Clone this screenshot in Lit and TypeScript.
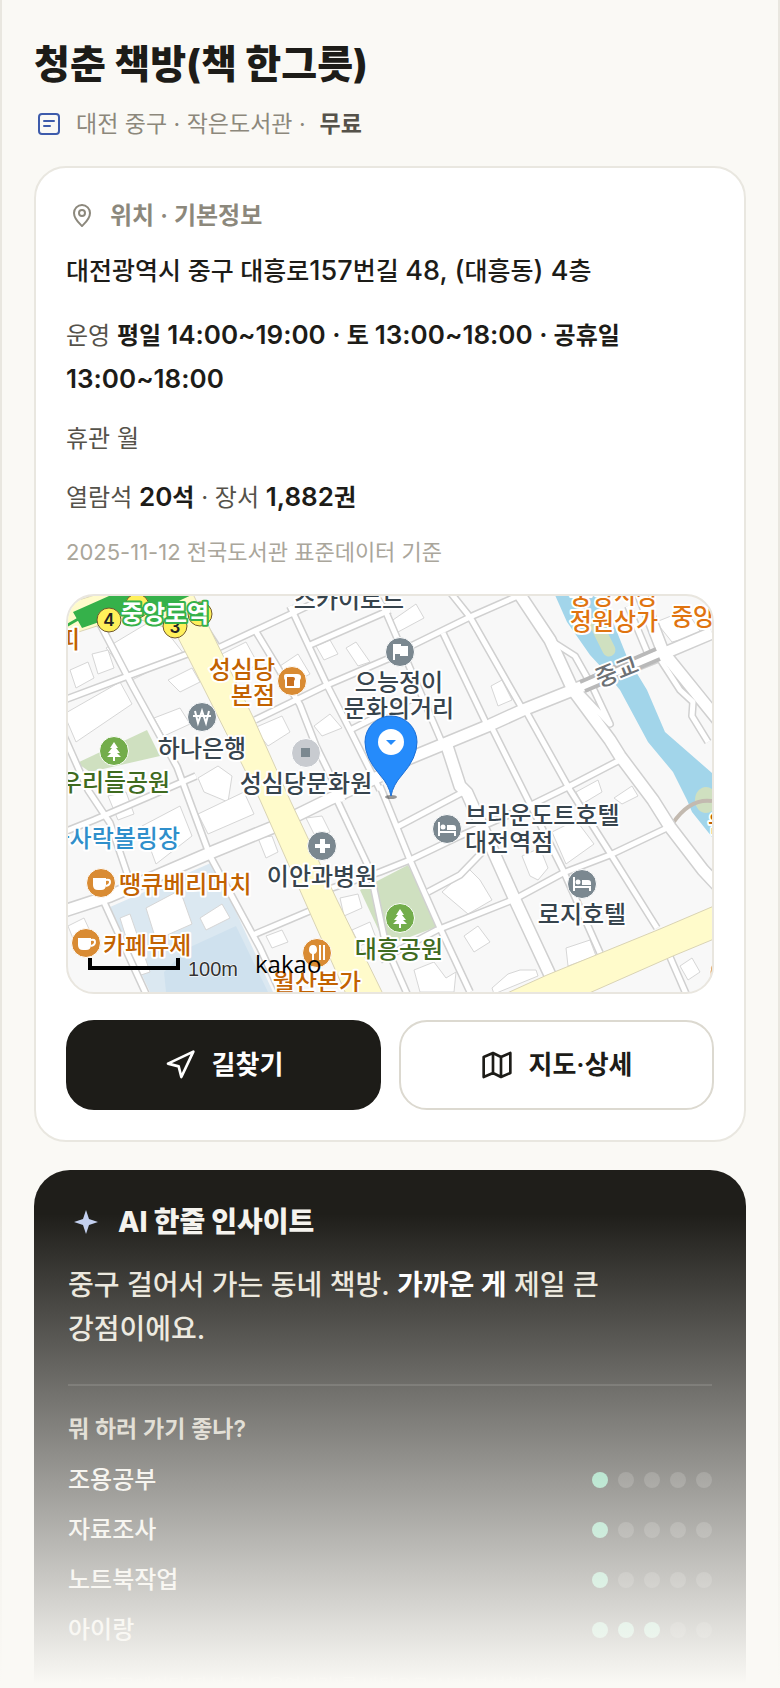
import { LitElement, html, css, svg } from 'lit';
import { customElement, property } from 'lit/decorators.js';
import { classMap } from 'lit/directives/class-map.js';

type Poi = {
  x: number;
  y: number;
  kind: string;
  icon: string;
  anchor: string;
  // [x, y, text] for each label line
  lines: [number, number, string][];
};

const MAJOR_ROADS = [
  '312,176 342,162 422,129 455,114 505,94 592,59 644,37',
  '450,-4 482,44 505,94 542,144 552,160 585,204 602,231 635,274 650,290',
  '-4,315 42,300 142,257 208,230',
  '379,150 392,190 399,197 447,304 482,379',
  '572,-4 595,56 650,124',
  '205,231 260,204 312,180',
];

const MINOR_ROADS = [
  '375,37 419,129',
  '382,-4 402,21 455,114',
  '187,124 259,89 322,62 345,49 402,21 452,-1',
  '305,-4 317,14 375,149',
  '424,132 460,204 495,274 532,357',
  '459,117 502,194 542,257 589,332',
  '459,211 502,190 552,164',
  '258,294 312,276 342,264 392,240 459,211',
  '329,231 399,194',
  '312,190 342,264 372,332 402,396',
  '312,364 369,334 447,303 495,277 542,259 599,232',
  '360,296 392,279 422,248',
  '602,361 619,400',
  '482,44 507,60 525,92 542,128 510,94',
  '560,10 580,58',
  '590,60 612,94 625,106 624,120 640,146',
  '10,-10 30,24 65,91 109,171 142,260 192,352 214,400',
  '-4,104 60,80 125,56',
  '150,52 225,17 269,-4',
  '187,34 210,72 232,109 248,150 275,205',
  '222,10 259,89 282,134 312,194',
  '242,49 322,14',
  '282,134 342,104',
  '-4,140 20,194 42,227 60,280 68,296',
  '-4,236 26,224 82,200 128,180',
  '35,304 79,400',
  '185,339 244,314',
  '269,204 302,274 318,350 340,400',
  '120,6 150,52',
];

const BUILDINGS = [
  '38,52 88,22 116,58 64,84',
  '2,74 20,66 26,82 8,92',
  '24,58 40,54 46,72 30,78',
  '-4,118 52,86 64,108 8,146',
  '100,84 124,72 132,86 112,96',
  '86,122 112,112 122,128 96,140',
  '150,60 178,46 190,68 166,82',
  '212,70 230,58 242,78 224,88',
  '186,132 214,120 222,136 200,150',
  '246,130 262,118 274,132 254,140',
  '248,50 262,44 270,58 256,64',
  '278,52 288,46 302,66 290,70',
  '130,182 150,170 164,180 160,206 136,196',
  '130,218 176,196 186,218 140,238',
  '74,230 112,210 124,240 88,268',
  '40,200 58,196 66,218 50,224',
  '190,242 204,240 210,256 198,262',
  '238,222 254,220 262,236 248,242',
  '322,26 348,8 356,22 330,36',
  '423,90 434,84 444,104 430,110',
  '508,196 530,184 534,196 514,208',
  '546,202 564,190 570,200 554,208',
  '484,236 508,224 526,248 498,268',
  '454,260 472,252 480,272 470,284 462,280',
  '374,296 400,272 412,284 424,304 400,318',
  '396,340 410,330 422,346 406,356',
  '346,374 366,366 378,382 388,376 386,396 352,396',
  '424,392 440,378 452,374 468,374 470,380 426,398',
  '498,352 522,344 528,360 500,370',
  '588,26 618,14 634,38 604,46',
  '612,370 624,362 632,376 620,384',
  '272,302 290,298 294,312 276,320',
  '284,334 302,326 308,342 292,350',
  '198,340 214,334 220,346 204,352',
  '0,330 16,322 26,344 8,350',
];

const CAMPUS = [
  '78,312 112,294 124,328 88,344',
  '132,322 154,308 162,322 138,334',
  '52,322 62,318 82,376 70,380',
];

const POIS: Poi[] = [
  { x: 224, y: 85, kind: 'food', icon: 'bread', anchor: 'end', lines: [[207, 82, '성심당'], [207, 108, '본점']] },
  { x: 134, y: 121, kind: 'place', icon: 'won', anchor: 'middle', lines: [[134, 161, '하나은행']] },
  { x: 46, y: 155, kind: 'park', icon: 'tree', anchor: 'middle', lines: [[47, 195, '우리들공원']] },
  { x: 238, y: 157, kind: 'muted', icon: 'square', anchor: 'middle', lines: [[238, 196, '성심당문화원']] },
  { x: 332, y: 56, kind: 'place', icon: 'flag', anchor: 'middle', lines: [[331, 95, '으능정이'], [331, 121, '문화의거리']] },
  { x: 379, y: 233, kind: 'place', icon: 'bed', anchor: 'start', lines: [[397, 228, '브라운도트호텔'], [397, 255, '대전역점']] },
  { x: 514, y: 288, kind: 'place', icon: 'bed', anchor: 'middle', lines: [[514, 327, '로지호텔']] },
  { x: 332, y: 322, kind: 'park', icon: 'tree', anchor: 'middle', lines: [[331, 362, '대흥공원']] },
  { x: 254, y: 250, kind: 'place', icon: 'cross', anchor: 'middle', lines: [[254, 289, '이안과병원']] },
  { x: 33, y: 287, kind: 'food', icon: 'cup', anchor: 'start', lines: [[51, 297, '땡큐베리머치']] },
  { x: 18, y: 347, kind: 'food', icon: 'cup', anchor: 'start', lines: [[35, 358, '카페뮤제']] },
  { x: 249, y: 357, kind: 'food', icon: 'fork', anchor: 'middle', lines: [[249, 395, '월산본가']] },
];

const GLYPHS: Record<string, unknown> = {
  bread: svg`<path fill="#fff" d="M-8-5q0-2 2-2H5q4 0 4 3 0 2-1 3v7q0 1-1 1H-6q-1 0-1-1v-7q-1-1-1-4z"/><path fill="#c9701f" d="M-5-4H1q2 0 2 2L2 0v5h-7v-6z"/>`,
  won: svg`<path fill="none" stroke="#fff" stroke-width="2" d="M-7-6-4 6 0-6 4 6 7-6M-9-1H9"/>`,
  tree: svg`<path fill="#fff" d="M0-9 4-3H2l4 5H3l4 4H1v4h-2V6h-6l4-4h-3l4-5h-2z"/>`,
  square: svg`<rect fill="#7b8890" x="-5" y="-5" width="9" height="9"/>`,
  flag: svg`<path fill="#fff" d="M-7-8H1v2h7V4H0V2h-5v6h-2z"/>`,
  bed: svg`<path fill="#fff" d="M-9-7h2V2H9v5H7V4H-7v3h-2zM0-4h6q3 0 3 3v2H0z"/><circle fill="#fff" cx="-4" cy="-2" r="2.5"/>`,
  cross: svg`<path fill="#fff" d="M-2-7h5v5h5v4H3v5h-5V2h-5v-4h5z"/>`,
  cup: svg`<path fill="#fff" d="M-8-5H5v7q0 5-5 5h-3q-5 0-5-5z"/><path fill="none" stroke="#fff" stroke-width="2" d="M5-3q4-1 4 2T5 3"/>`,
  fork: svg`<path fill="#fff" d="M-4-8q4 0 4 5Q0 0-3 1v8h-2V1q-3-1-3-4 0-5 4-5zM2-8h2V7H2zM6-8h2V7H6z"/>`,
};

@customElement('mini-map')
export class MiniMap extends LitElement {
  static styles = css`
    :host {
      display: block;
      height: 400px;
      overflow: hidden;
      border: 2px solid #e9e6df;
      border-radius: 28px;
      background: #f8f8f8;
    }

    svg {
      display: block;
      width: 100%;
      height: 100%;
    }

    text {
      font-family: 'Noto Sans CJK KR', sans-serif;
      font-size: 24px;
      font-weight: 500;
      fill: #37444d;
      stroke: #fff;
      stroke-width: 4px;
      stroke-linejoin: round;
      paint-order: stroke;
    }

    .casing,
    .surface {
      fill: none;
      stroke-linejoin: round;
    }

    .casing {
      stroke: #d0d0d0;
      stroke-width: 8px;
    }

    .surface {
      stroke: #fff;
      stroke-width: 5px;
    }

    .casing.major {
      stroke-width: 14px;
    }

    .surface.major {
      stroke-width: 11px;
    }

    .avenue {
      fill: #fffbcb;
      stroke: #d9d3b4;
      stroke-width: 1px;
    }

    .river {
      fill: #a2d5ea;
    }

    .green {
      fill: #cfe0c0;
    }

    .campus {
      fill: #dbe8f1;
    }

    .campus-inner {
      fill: #cfe1ee;
    }

    .building {
      fill: #fff;
      stroke: #d6d6d6;
      stroke-width: 1px;
    }

    .bridge {
      fill: none;
      stroke: #b9b9b9;
      stroke-width: 4px;
    }

    .dot {
      stroke: #fff;
      stroke-width: 1px;
      fill: #7b8890;
    }

    .dot.food {
      fill: #d98b33;
    }

    .dot.park {
      fill: #73ad4b;
    }

    .dot.muted {
      fill: #c8cbd0;
    }

    text.food {
      fill: #c26200;
    }

    text.park {
      fill: #3f6b1f;
    }

    text.market {
      fill: #e07410;
    }

    text.leisure {
      fill: #2f8fcb;
    }

    text.road {
      fill: #6d7175;
    }

    text.station {
      fill: #fff;
      stroke: #35b14a;
      font-weight: 700;
    }

    .exit {
      fill: #fff05a;
      stroke: #6f5730;
      stroke-width: 1px;
    }

    text.exit-no {
      font-family: Inter, sans-serif;
      font-size: 17px;
      font-weight: 600;
      fill: #222;
      stroke: none;
    }

    .scale-bar {
      fill: none;
      stroke: #000;
      stroke-width: 4px;
    }

    text.scale {
      font-family: 'Liberation Sans', sans-serif;
      font-size: 20px;
      font-weight: 400;
      fill: #333;
      stroke-width: 1px;
    }

    text.brand {
      font-family: 'Open Sans', sans-serif;
      font-size: 24px;
      fill: #000;
      stroke: none;
    }
  `;

  renderPoi(poi: Poi) {
    return svg`
      <circle class="dot ${poi.kind}" cx=${poi.x} cy=${poi.y} r="14.5" />
      <g transform="translate(${poi.x} ${poi.y})">${GLYPHS[poi.icon]}</g>
      ${poi.lines.map(
        ([x, y, label]) =>
          svg`<text class=${poi.kind} x=${x} y=${y} text-anchor=${poi.anchor}>${label}</text>`
      )}
    `;
  }

  render() {
    return html`
      <svg viewBox="0 0 644 396" preserveAspectRatio="xMidYMid slice" role="img" aria-label="청춘 책방 주변 지도">
        <!-- ground -->
        <polygon class="campus" points="42,311 145,266 205,396 82,396" />
        <path class="campus-inner" d="M96 376 120 352 168 330 200 396H98z" />
        <polygon class="green" points="9,167 79,134 92,160 22,176" />
        <polygon class="green" points="292,294 340,269 371,330 318,350" />
        ${BUILDINGS.map((p) => svg`<polygon class="building" points=${p} />`)}
        ${CAMPUS.map((p) => svg`<polygon class="building" points=${p} />`)}

        <polygon
          class="river"
          points="487,-1 499,26 522,59 534,72 552,94 580,146 605,176 619,204 624,216 644,241 644,177 597,136 579,94 559,61 545,26 532,-1"
        />
        <path fill="none" stroke="#cfe0c0" stroke-width="13" stroke-linecap="round" d="M528 28 541 54" />
        <ellipse class="green" cx="638" cy="204" rx="11" ry="13" />
        <path fill="none" stroke="#c3bab0" stroke-width="4" d="M605 227Q622 202 644 205" />

        <!-- streets: every casing goes under every surface -->
        ${MINOR_ROADS.map((p) => svg`<polyline class="casing" points=${p} />`)}
        ${MAJOR_ROADS.map((p) => svg`<polyline class="casing major" points=${p} />`)}
        ${MINOR_ROADS.map((p) => svg`<polyline class="surface" points=${p} />`)}
        ${MAJOR_ROADS.map((p) => svg`<polyline class="surface major" points=${p} />`)}
        <polygon
          class="avenue"
          points="-2,40 -2,8 30,-2 125,-2 144,37 185,121 222,204 269,304 315,398 278,398 242,317 192,204 120,61 106,34 60,20"
        />
        <polygon class="avenue" points="437,398 479,379 592,333 646,310 646,343 605,360 519,398" />
        <path class="bridge" d="M512 86 588 53M517 95 592 63" />

        <!-- subway station -->
        <path fill="#35b14a" d="M5 16 50-4H130l-30 14-40 6-46 16z" />
        <path fill="none" stroke="#35b14a" stroke-width="3" d="M-2 30 12 22" />
        <circle class="exit" cx="69" cy="10" r="12" />
        <circle class="exit" cx="132" cy="18" r="12" />
        <circle class="exit" cx="107" cy="30" r="12" />
        <circle class="exit" cx="41" cy="24" r="12" />
        <text class="exit-no" x="107" y="37" text-anchor="middle">3</text>
        <text class="exit-no" x="41" y="30" text-anchor="middle">4</text>
        <text class="station" x="97" y="26" text-anchor="middle">중앙로역</text>

        <text x="281" y="12" text-anchor="middle">스카이로드</text>
        <text class="market" x="546" y="8" text-anchor="middle">중앙시장</text>
        <text class="market" x="546" y="34" text-anchor="middle">정원상가</text>
        <text class="market" x="603" y="29">중앙</text>
        <text class="food" x="12" y="52" text-anchor="end">피</text>
        <text class="food" x="640" y="236">원</text>
        <circle class="dot food" cx="656" cy="376" r="14" />
        <text class="leisure" x="112" y="251" text-anchor="end">가사락볼링장</text>
        <text class="road" x="549" y="84" text-anchor="middle" transform="rotate(-22 549 76)">중교</text>
        ${POIS.map((poi) => this.renderPoi(poi))}

        <!-- marker -->
        <ellipse cx="323" cy="201" rx="6" ry="2" fill="#0006" />
        <path
          fill="#258bfb"
          stroke="#1b6fd6"
          d="M323 200Q321 189 312 179 297 162 297 146A26 26 0 0 1 349 146Q349 162 334 179 325 189 323 200z"
        />
        <circle cx="323" cy="146" r="13" fill="#fff" />
        <path fill="#258bfb" d="M318 144H328L323 149z" />

        <path class="scale-bar" d="M22 362V372H110V362" />
        <text class="scale" x="120" y="380">100m</text>
        <text class="brand" x="187" y="377">kakao</text>
      </svg>
    `;
  }
}

@customElement('score-row')
export class ScoreRow extends LitElement {
  @property() label = '';
  @property({ type: Number }) score = 0;

  static styles = css`
    :host {
      display: flex;
      align-items: center;
      justify-content: space-between;
      font-size: 24px;
      font-weight: 500;
      line-height: 50px;
      color: #f2efe8;
    }

    .dots {
      display: flex;
      gap: 10px;
    }

    .dot {
      width: 16px;
      height: 16px;
      border-radius: 50%;
      background: rgba(255, 255, 255, 0.16);
    }

    .dot.on {
      background: #6fcfa6;
    }
  `;

  render() {
    return html`
      <span>${this.label}</span>
      <span class="dots" role="img" aria-label="5점 중 ${this.score}점">
        ${[1, 2, 3, 4, 5].map((n) => html`<i class=${classMap({ dot: true, on: n <= this.score })}></i>`)}
      </span>
    `;
  }
}

@customElement('app-root')
export class AppRoot extends LitElement {
  @property({ attribute: false }) scores = [
    { label: '조용공부', score: 1 },
    { label: '자료조사', score: 1 },
    { label: '노트북작업', score: 1 },
    { label: '아이랑', score: 3 },
  ];

  static styles = css`
    :host {
      display: block;
      min-height: 100vh;
      background: #faf9f5;
      color: #1d1c18;
      font-family: Inter, 'Noto Sans CJK KR', sans-serif;
      font-size: 24px;
      word-break: keep-all;
    }

    * {
      box-sizing: border-box;
    }

    h1,
    h2,
    h3,
    p {
      margin: 0;
    }

    main {
      border: solid #e9e7e0;
      border-width: 0 2px;
      padding: 38px 32px 0;
    }

    h1 {
      font-size: 39px;
      font-weight: 800;
      line-height: 52px;
    }

    .meta {
      display: flex;
      align-items: center;
      margin-top: 16px;
      font-size: 23px;
      line-height: 36px;
      color: #8c887c;
    }

    .meta strong {
      margin-left: 14px;
      font-weight: 600;
      color: #55524a;
    }

    .icon {
      flex: none;
      fill: none;
      stroke: currentColor;
      stroke-width: 2;
      stroke-linecap: round;
      stroke-linejoin: round;
    }

    .meta .icon {
      margin-right: 12px;
      color: #3d5bab;
    }

    .card {
      margin-top: 24px;
      padding: 30px;
      border: 2px solid #e9e7e0;
      border-radius: 32px;
      background: #fff;
    }

    .card h2 {
      display: flex;
      align-items: center;
      gap: 12px;
      font-size: 24px;
      font-weight: 600;
      line-height: 36px;
      color: #8c887c;
    }

    .address {
      margin-top: 18px;
      font-size: 25px;
      font-weight: 500;
      line-height: 38px;
    }

    .address .num {
      font-size: 27px;
    }

    .facts {
      display: grid;
      gap: 15px;
      margin: 24px 0 14px;
      line-height: 44px;
      color: #55524a;
    }

    .facts strong {
      font-weight: 600;
      color: #1d1c18;
    }

    .facts .num {
      font-size: 26px;
    }

    /* digits are set larger than the Hangul around them */
    .num {
      line-height: 1;
    }

    .source {
      font-size: 22px;
      line-height: 36px;
      color: #aaa69b;
    }

    mini-map {
      margin-top: 24px;
    }

    .actions {
      display: grid;
      grid-template-columns: 1fr 1fr;
      gap: 18px;
      margin-top: 26px;
    }

    button {
      display: flex;
      align-items: center;
      justify-content: center;
      gap: 16px;
      height: 90px;
      border: 2px solid #dcd9d0;
      border-radius: 28px;
      background: #fff;
      color: #1d1c18;
      font: inherit;
      font-size: 26px;
      font-weight: 600;
      line-height: 34px;
    }

    button.primary {
      border-color: #1d1c18;
      background: #1d1c18;
      color: #fff;
    }

    /* teaser that fades into the page, side borders included */
    .preview {
      position: relative;
      max-height: 514px;
      margin: 28px -34px 0;
      padding: 0 34px;
      overflow: hidden;
    }

    .preview::after {
      content: '';
      position: absolute;
      inset: auto 0 0;
      height: 470px;
      background: linear-gradient(rgba(250, 249, 245, 0), #faf9f5);
      pointer-events: none;
    }

    .insight {
      padding: 34px;
      border-radius: 36px;
      background: #1f1e1a;
      color: #e9e5da;
    }

    .insight h2 {
      display: flex;
      align-items: center;
      gap: 14px;
      font-size: 28px;
      font-weight: 800;
      line-height: 36px;
      color: #f5f3ee;
    }

    .insight .icon {
      fill: #c3d0f0;
      stroke: none;
    }

    .summary {
      margin-top: 23px;
      padding-bottom: 33px;
      border-bottom: 2px solid rgba(255, 255, 255, 0.12);
      font-size: 28px;
      font-weight: 500;
      line-height: 44px;
    }

    .summary strong {
      font-weight: 700;
      color: #fff;
    }

    .insight h3 {
      margin: 25px 0 8px;
      font-size: 23px;
      font-weight: 600;
      line-height: 36px;
      color: #cfcabd;
    }

    .note {
      display: flex;
      align-items: center;
      gap: 10px;
      margin-top: 14px;
      font-size: 18px;
      line-height: 34px;
      color: #a39f94;
    }
  `;

  render() {
    return html`
      <main>
        <h1>청춘 책방(책 한그릇)</h1>
        <p class="meta">
          <svg class="icon" width="30" height="30" viewBox="0 0 30 30">
            <rect x="5" y="5" width="20" height="20" rx="3" />
            <path d="M10 12H20M10 17H16" />
          </svg>
          <span>대전 중구 · 작은도서관 ·</span>
          <strong>무료</strong>
        </p>

        <section class="card">
          <h2>
            <svg class="icon" width="32" height="32" viewBox="0 0 32 32">
              <path d="M24 13c0 6-5 10-8 13-3-3-8-7-8-13a8 8 0 0 1 16 0z" />
              <circle cx="16" cy="13" r="3" />
            </svg>
            위치 · 기본정보
          </h2>
          <p class="address">
            대전광역시 중구 대흥로<span class="num">157</span>번길 <span class="num">48, (</span>대흥동<span class="num">) 4</span>층
          </p>
          <div class="facts">
            <p>
              운영
              <strong>평일 <span class="num">14:00~19:00 ·</span> 토 <span class="num">13:00~18:00 ·</span> 공휴일
              <span class="num">13:00~18:00</span></strong>
            </p>
            <p>휴관 월</p>
            <p>
              열람석 <strong><span class="num">20</span>석</strong> · 장서
              <strong><span class="num">1,882</span>권</strong>
            </p>
          </div>
          <p class="source">2025-11-12 전국도서관 표준데이터 기준</p>
          <mini-map></mini-map>
          <div class="actions">
            <button class="primary" type="button">
              <svg class="icon" width="32" height="32" viewBox="0 0 24 24">
                <path d="M3 11 22 2 13 21 11 13z" />
              </svg>
              길찾기
            </button>
            <button type="button">
              <svg class="icon" width="32" height="32" viewBox="0 0 24 24">
                <path d="M2 6 9 3 15 6 22 3V18L15 21 9 18 2 21zM9 3V18M15 6V21" />
              </svg>
              지도·상세
            </button>
          </div>
        </section>

        <div class="preview">
          <section class="insight">
            <h2>
              <svg class="icon" width="36" height="36" viewBox="0 0 36 36">
                <path d="M18 6 21 15 30 18 21 21 18 30 15 21 6 18 15 15z" />
              </svg>
              AI 한줄 인사이트
            </h2>
            <p class="summary">중구 걸어서 가는 동네 책방. <strong>가까운 게</strong> 제일 큰 강점이에요.</p>
            <h3>뭐 하러 가기 좋나?</h3>
            ${this.scores.map((s) => html`<score-row label=${s.label} score=${s.score}></score-row>`)}
            <p class="note">
              <svg class="icon" width="24" height="24" viewBox="0 0 24 24">
                <path d="M12 4 14 10 20 12 14 14 12 20 10 14 4 12 10 10z" />
              </svg>
              공공데이터(좌석·장서·운영시간)를 바탕으로 AI가 분석했어요
            </p>
          </section>
        </div>
      </main>
    `;
  }
}
